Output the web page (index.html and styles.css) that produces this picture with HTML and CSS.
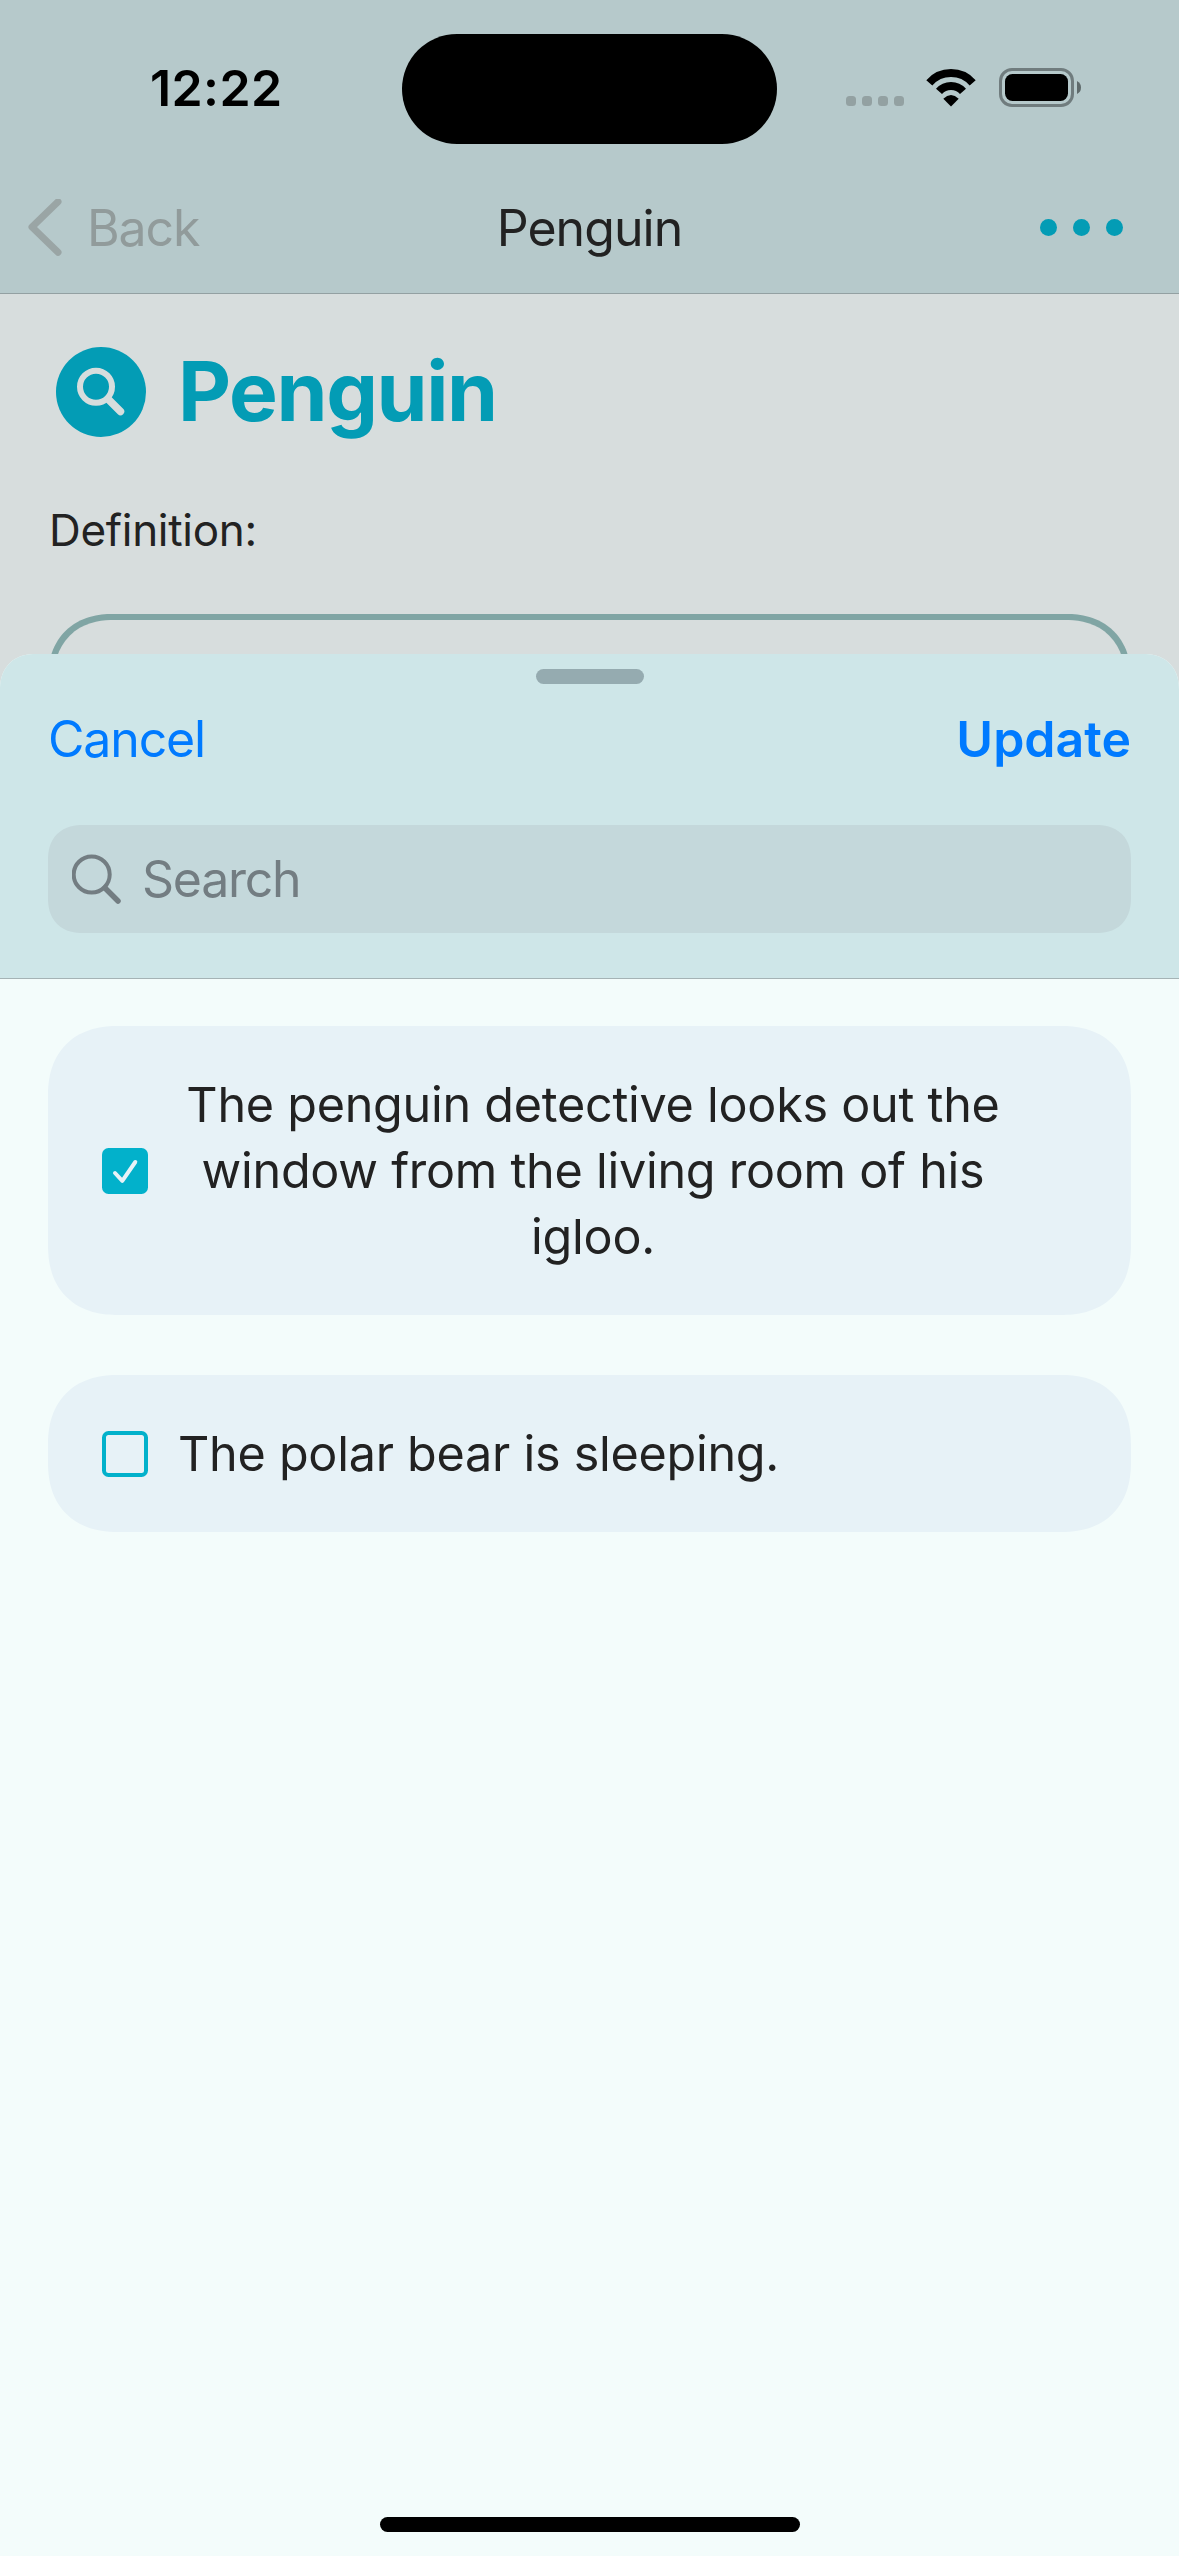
FILE: index.html
```html
<!DOCTYPE html>
<html lang="en">
<head>
<meta charset="utf-8">
<title>Penguin</title>
<link rel="stylesheet" href="styles.css">
</head>
<body>
<div class="screen">
  <header class="top">
    <div class="status">
      <div class="time">12:22</div>
      <div class="island"></div>
      <div class="indicators">
        <div class="signal"><i></i><i></i><i></i><i></i></div>
        <svg class="wifi" width="51" height="38" viewBox="0 0 51 38">
          <path d="M3.3 13.8A29 29 0 0 1 46.7 13.8M13 22.4A16 16 0 0 1 37 22.4" fill="none" stroke="#000" stroke-width="8"/>
          <path d="M25 37.5L17.3 29.8Q25 22.4 32.7 29.8Z"/>
        </svg>
        <svg class="battery" width="82" height="39" viewBox="0 0 82 39">
          <rect x="1.5" y="1.5" width="72" height="36" rx="11.5" fill="none" stroke="#707c7e" stroke-width="3"/>
          <rect x="6" y="6" width="63" height="27" rx="7.5"/>
          <path d="M78 13Q82 15 82 19.5Q82 24 78 26Z" fill="#5f6a6b"/>
        </svg>
      </div>
    </div>
    <nav class="nav">
      <div class="back">
        <svg width="34" height="58" viewBox="0 0 34 58"><path d="M30 2.8L4 28L30 53.2" fill="none" stroke="#9aa5a5" stroke-width="7" stroke-linecap="round" stroke-linejoin="round"/></svg>
        <span>Back</span>
      </div>
      <div class="title">Penguin</div>
      <div class="more"><i></i><i></i><i></i></div>
    </nav>
  </header>

  <main class="page">
    <div class="heading">
      <svg width="90" height="90" viewBox="0 0 90 90">
        <circle cx="45" cy="45" r="45" fill="#039cb5"/>
        <circle cx="40" cy="39.7" r="16" fill="none" stroke="#d7dddd" stroke-width="6"/>
        <path d="M52 52L64.5 64.5" stroke="#d7dddd" stroke-width="7.5" stroke-linecap="round"/>
      </svg>
      <h1>Penguin</h1>
    </div>
    <div class="label">Definition:</div>
    <div class="field"></div>
  </main>

  <section class="sheet">
    <div class="sheet-head">
      <div class="grabber"></div>
      <div class="actions">
        <span class="cancel">Cancel</span>
        <span class="update">Update</span>
      </div>
      <div class="search">
        <svg width="50" height="51" viewBox="0 0 50 51" fill="none" stroke="#737d82">
          <circle cx="19.7" cy="20.5" r="18" stroke-width="4"/>
          <path d="M33 34L46 47" stroke-width="5.5" stroke-linecap="round"/>
        </svg>
        <span>Search</span>
      </div>
    </div>
    <div class="list">
      <div class="card">
        <svg class="box" width="46" height="46" viewBox="0 0 46 46">
          <rect width="46" height="46" rx="6.5" fill="#02b1cb"/>
          <path d="M13 25L20.3 32.8L33.3 14" fill="none" stroke="#e7f2f7" stroke-width="4" stroke-linecap="round" stroke-linejoin="round"/>
        </svg>
        <p class="wrapped">The penguin detective looks out the window from the living room of his igloo.</p>
      </div>
      <div class="card">
        <svg class="box" width="46" height="46" viewBox="0 0 46 46">
          <rect x="2" y="2" width="42" height="42" rx="4.5" fill="none" stroke="#02b1cb" stroke-width="4"/>
        </svg>
        <p>The polar bear is sleeping.</p>
      </div>
    </div>
    <div class="home"></div>
  </section>
</div>
</body>
</html>
```
FILE: styles.css
```css
* { box-sizing: border-box; }

body {
  margin: 0;
  font-family: Inter, "Liberation Sans", sans-serif;
  color: #222;
}

h1, p { margin: 0; }
svg { display: block; flex: none; }

.screen {
  position: relative;
  width: 1179px;
  height: 2556px;
  overflow: hidden;
  background: #d7dddd;
}

.top {
  height: 294px;
  background: #b6c9cb;
  border-bottom: 1px solid #93a0a2;
}

.status {
  display: grid;
  grid-template-columns: 1fr 375px 1fr;
  height: 162px;
  padding-top: 34px;
  align-items: start;
}

.time {
  padding-left: 150px;
  font-size: 50px;
  font-weight: 600;
  line-height: 108px;
  letter-spacing: 0.4px;
  color: #000;
}

.island {
  height: 110px;
  border-radius: 55px;
  background: #000;
}

.indicators {
  display: flex;
  align-items: flex-end;
  height: 73px;
  padding-left: 69px;
}

.signal { display: flex; gap: 6px; padding-bottom: 1px; }
.signal i { width: 10px; height: 10px; border-radius: 3.5px; background: #93a1a2; }
.wifi { margin-left: 22px; }
.battery { margin-left: 22px; }

.nav {
  display: grid;
  grid-template-columns: 1fr auto 1fr;
  align-items: center;
  height: 131px;
  padding: 0 56px 0 28px;
}

.back {
  display: flex;
  align-items: center;
  gap: 25px;
  font-size: 50px;
  letter-spacing: -1.1px;
  color: #919b9b;
}

.title {
  padding-left: 28px;
  font-size: 50px;
  letter-spacing: -0.95px;
}

.more { display: flex; justify-content: flex-end; gap: 16px; }
.more i { width: 17px; height: 17px; border-radius: 50%; background: #039cb5; }

.page { padding: 53px 48px 0; }

.heading {
  display: flex;
  align-items: center;
  gap: 32px;
  height: 90px;
  padding-left: 8px;
}

.heading h1 {
  font-size: 82px;
  font-weight: 700;
  line-height: 90px;
  letter-spacing: -1.4px;
  color: #039cb5;
}

.label {
  margin-top: 66px;
  padding-left: 1px;
  font-size: 44px;
  line-height: 54px;
  letter-spacing: -0.3px;
}

.field {
  height: 400px;
  margin-top: 57px;
  border: 6px solid #80a5a4;
  border-radius: 60px;
}

.sheet {
  position: absolute;
  inset: 654px 0 0 0;
  display: flex;
  flex-direction: column;
  overflow: hidden;
  border-radius: 30px 30px 0 0;
  background: #f3fcfb;
}

.sheet-head {
  height: 325px;
  padding: 15px 48px 0;
  background: #cee6e8;
  border-bottom: 1px solid #a5b3b5;
}

.grabber {
  width: 108px;
  height: 15px;
  margin: 0 auto;
  border-radius: 8px;
  background: #95abb0;
}

.actions {
  display: flex;
  justify-content: space-between;
  margin-top: 25px;
  font-size: 50px;
  line-height: 60px;
  color: #007aff;
}

.cancel { letter-spacing: -1.17px; }
.update { font-weight: 600; }

.search {
  display: flex;
  align-items: center;
  gap: 20px;
  height: 108px;
  margin-top: 56px;
  padding-left: 24px;
  border-radius: 30px;
  background: #c4d8db;
  font-size: 50px;
  letter-spacing: -1.25px;
  color: #737d82;
}

.list {
  display: flex;
  flex-direction: column;
  gap: 60px;
  flex: 1;
  padding: 47px 48px 0;
}

.card {
  display: flex;
  align-items: center;
  gap: 30px;
  padding: 46px 123px 45px 54px;
  border-radius: 62px;
  background: #e7f2f7;
  font-size: 48.5px;
  line-height: 66px;
  letter-spacing: -0.25px;
}

.wrapped { flex: 1; text-align: center; }

.home {
  width: 420px;
  height: 15px;
  margin: 0 auto 24px;
  border-radius: 8px;
  background: #000;
}

/* Continuous corners */
@supports (corner-shape: superellipse(1.2)) {
  .card { border-radius: 70px; corner-shape: superellipse(1.2); }
  .field { border-radius: 64px; corner-shape: superellipse(1.15); }
  .search { border-radius: 35px; corner-shape: superellipse(1.2); }
  .sheet { border-radius: 36px 36px 0 0; corner-shape: superellipse(1.2); }
}
```
